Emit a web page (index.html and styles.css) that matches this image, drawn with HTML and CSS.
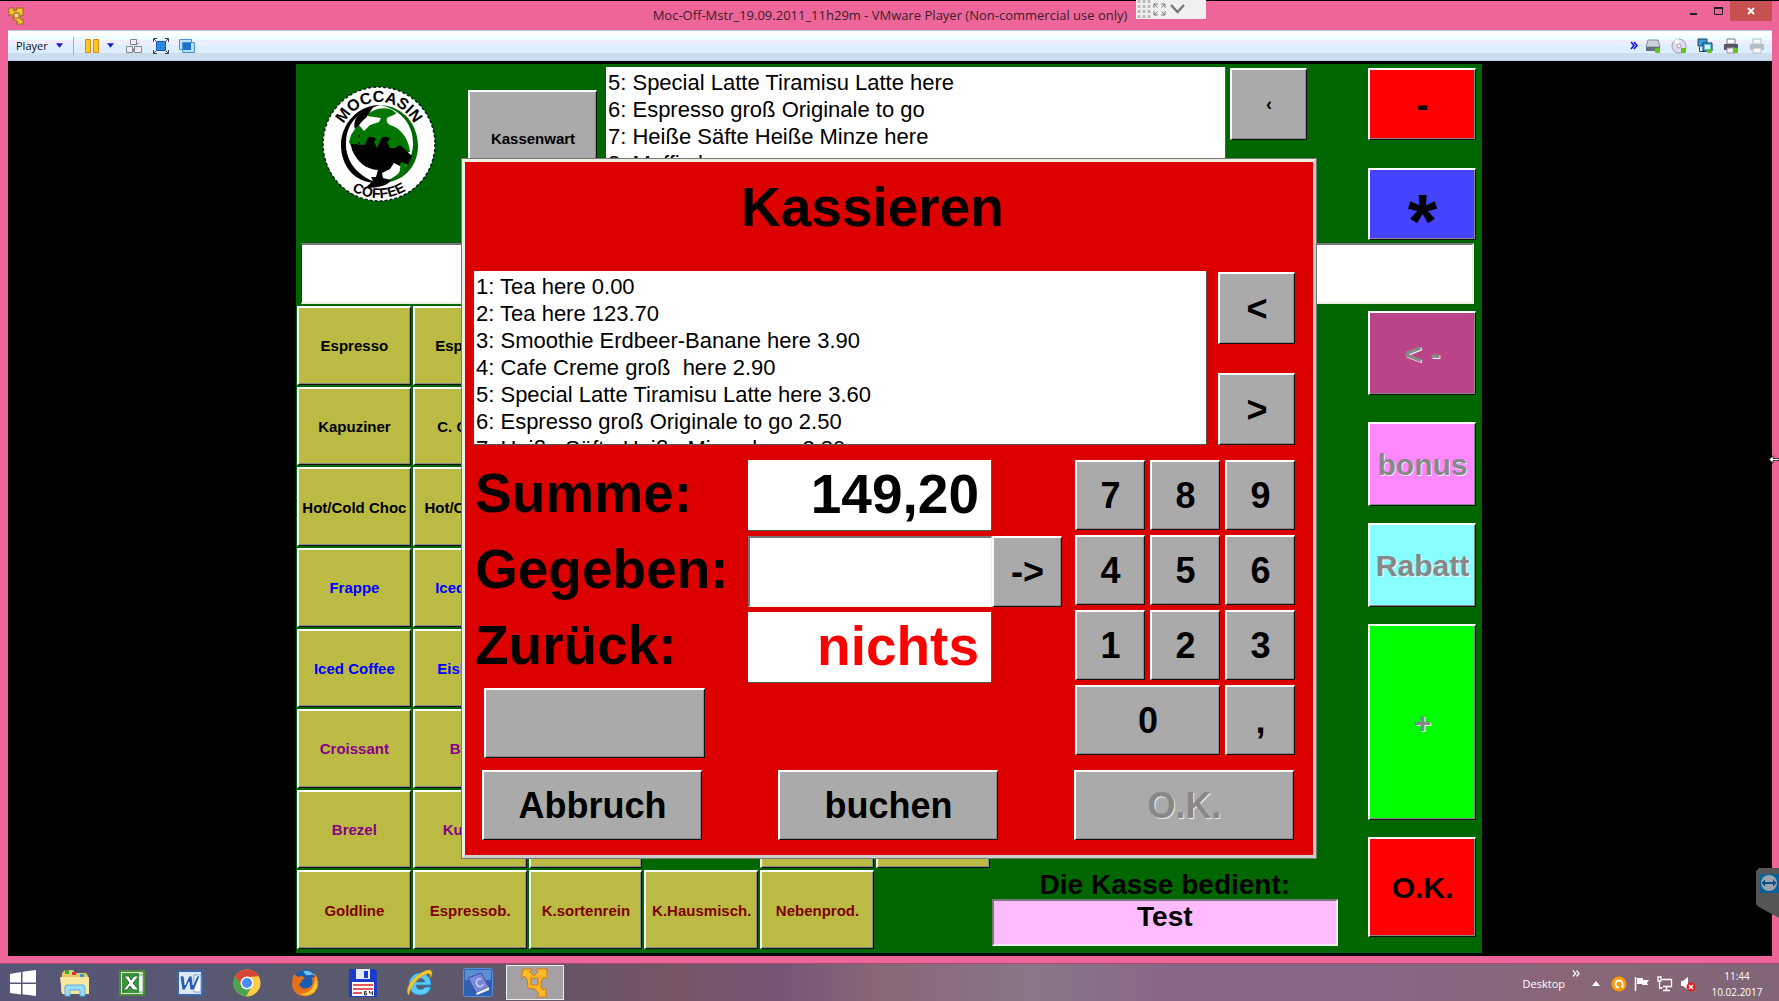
FILE: index.html
```html
<!DOCTYPE html>
<html lang="de">
<head>
<meta charset="utf-8">
<meta name="viewport" content="width=device-width, initial-scale=1">
<title>Moc-Off-Mstr_19.09.2011_11h29m - VMware Player</title>
<link rel="stylesheet" href="styles.css">
</head>
<body>
<div class="window">
  <header class="titlebar">
    <svg class="titlebar-icon" viewBox="0 0 16 18" width="16" height="18" aria-hidden="true">
      <path d="M1 1h5l-1 2 2 1 2-1-1-2h7v8l-2-1-1 3 1 2 2-1v5H8l2-2-2-2H5V9L3 7 1 9z" fill="#fbc42c" stroke="#9a6a1a"/>
      <path d="M6 6h5v5H6z" fill="#ffe27a" stroke="#9a4a2a"/>
    </svg>
    <h1 class="titlebar-text">Moc-Off-Mstr_19.09.2011_11h29m - VMware Player (Non-commercial use only)</h1>
    <div class="window-controls">
      <button class="win-btn" aria-label="Minimieren"><svg viewBox="0 0 18 18" width="18" height="18"><path d="M6 11h7v2H6z" fill="#222"/></svg></button>
      <button class="win-btn" aria-label="Maximieren"><svg viewBox="0 0 18 18" width="18" height="18"><path d="M5.500 6.500h8v6h-8z" fill="none" stroke="#222"/><path d="M5 5h9v2H5z" fill="#222"/></svg></button>
      <button class="win-btn win-btn-close" aria-label="Schließen"><svg viewBox="0 0 18 18" width="18" height="18"><path d="M6 6l6 6M12 6l-6 6" stroke="#fff" stroke-width="1.800"/></svg></button>
    </div>
  </header>

  <nav class="toolbar" aria-label="Player">
    <div class="toolbar-group">
      <button class="tool tool-menu">Player <svg viewBox="0 0 8 5" width="7" height="5"><path d="M0 0h8L4 5z" fill="#1a1ac8"/></svg></button>
      <span class="tool-sep"></span>
      <button class="tool tool-pause" aria-label="Pause"><svg viewBox="0 0 14 14" width="14" height="14"><path d="M.5.5h5v13h-5zM8.500.5h5v13h-5z" fill="#ffc81e" stroke="#d88a10"/></svg><svg viewBox="0 0 8 5" width="7" height="5"><path d="M0 0h8L4 5z" fill="#1a1ac8"/></svg></button>
      <button class="tool" aria-label="Strg+Alt+Entf"><svg viewBox="0 0 18 16" width="18" height="16"><path d="M5.500 1.500h6v5h-6zM1.500 8.500h6v6h-6zM9.500 8.500h7v6h-7z" fill="#eef" stroke="#888"/><path d="M7 6.500h5l2-2M8 14l1-4" stroke="#777" fill="none"/></svg></button>
      <button class="tool" aria-label="Vollbild"><svg viewBox="0 0 16 16" width="16" height="16"><path d="M3.500 3.500h9v9h-9z" fill="#2c8ae0" stroke="#1a58a8"/><path d="M.5 4V.5H4M12 .5h3.500V4M15.500 12v3.500H12M4 15.500H.5V12" fill="none" stroke="#345"/><path d="M1 1l2 2M15 1l-2 2M1 15l2-2M15 15l-2-2" stroke="#345"/></svg></button>
      <button class="tool" aria-label="Unity"><svg viewBox="0 0 16 14" width="16" height="14"><path d="M.5.5h12v10H.5z" fill="#bfe0fa" stroke="#4a90d0"/><path d="M3.500 3.500h12v10h-12z" fill="#bfe0fa" stroke="#4a90d0"/><path d="M4 4h8v7H4z" fill="#1c72d0"/></svg></button>
    </div>
    <div class="toolbar-group toolbar-devices">
      <button class="tool" aria-label="Mehr"><svg viewBox="0 0 8 9" width="8" height="9"><path d="M1 1l3 3.500L1 8M4 1l3 3.500L4 8" fill="none" stroke="#11f" stroke-width="1.600"/></svg></button>
      <button class="tool" aria-label="Festplatte"><svg viewBox="0 0 16 16" width="16" height="16"><path d="M3 2h10l2 7H1z" fill="#ccd4da" stroke="#889"/><path d="M1 9h14v4H1z" fill="#667078"/><rect x="10" y="10" width="5" height="5" rx="1" fill="#5fc41c"/></svg></button>
      <button class="tool" aria-label="CD"><svg viewBox="0 0 16 16" width="16" height="16"><circle cx="8" cy="8" r="7" fill="#dde" stroke="#99a"/><path d="M8 8L3 3a7 7 0 0 1 5-2z" fill="#fff"/><circle cx="8" cy="8" r="2" fill="#fff" stroke="#99a"/><rect x="10" y="10" width="5" height="5" rx="1" fill="#5fc41c"/></svg></button>
      <button class="tool" aria-label="Netzwerk"><svg viewBox="0 0 16 16" width="16" height="16"><path d="M1 1h9v7H1z" fill="#3a9ad8" stroke="#246"/><path d="M6 5h9v8H6z" fill="#58c0f4" stroke="#135"/><path d="M8 7h5v4H8z" fill="#d8f2ff"/><path d="M2.500 9v4.500H9" stroke="#246" fill="none"/><rect x="10" y="11" width="5" height="4" rx="1" fill="#5fc41c"/></svg></button>
      <button class="tool" aria-label="Drucker"><svg viewBox="0 0 16 16" width="16" height="16"><path d="M4 1h8v5H4z" fill="#fff" stroke="#778"/><path d="M1 6h14v6H1z" fill="#556"/><path d="M4 10h8v5H4z" fill="#eef" stroke="#99a"/><rect x="10" y="10" width="5" height="5" rx="1" fill="#5fc41c"/></svg></button>
      <button class="tool" aria-label="Drucker 2" disabled><svg viewBox="0 0 16 16" width="16" height="16"><path d="M4 1h8v5H4z" fill="#f4f6fa" stroke="#b4bcc8"/><path d="M1 6h14v6H1z" fill="#b4bcc8"/><path d="M4 10h8v5H4z" fill="#f4f6fa" stroke="#b4bcc8"/></svg></button>
    </div>
  </nav>

  <div class="guest">
    <main class="pos">
      <div class="pos-top">
        <div class="brand">
          <svg viewBox="0 0 114 116" width="114" height="116" role="img" aria-label="Moccasin Coffee">
            <defs>
              <path id="arc-top" d="M17 58a40 42 0 0 1 80 0"/>
              <path id="arc-bottom" d="M4 58a53 54 0 0 0 106 0"/>
            </defs>
            <ellipse cx="57" cy="58" rx="56" ry="57" fill="#fff" stroke="#021" stroke-width="1.500" stroke-dasharray="3 2"/>
            <path d="M58 19c24 1 38 20 38 41S80 98 57 97c16-3 33-17 34-38S78 23 58 19z" fill="#060"/>
            <path d="M58 19C36 19 19 38 19 59s14 39 38 38C38 92 23 77 24 56S38 25 58 19z" fill="#000"/>
            <path d="M33 43c-3-10 6-20 19-23l-8 12c-6 4-7 9-11 11z" fill="#000"/>
            <path d="M45 30c4-7 20-11 28-4 4 2-5 4-8 6-1 3 0 5 3 7 13 4 19 16 20 27l-12 1-34 2-12-7-3-6 2-7 4-6 4-4 5 6 6-6 9-3 2-4z" fill="#070"/>
            <path d="M29 58l14 1 2-6c1-3 6-3 9 0l-2 3 3 6 4-9c2-3 7-3 9 0l-3 3 3 6h5l5-3 12 11-4 8-8 2-6-3-4 6-8 4 1 5 8 2c-2 5-12 8-26 8l8-7-2-4h5l2-7c-12-1-20-7-26-20z" fill="#000"/>
            <path d="M78 77c6-2 8 4 3 11l-8 6c4-6 6-10 5-17z" fill="#070"/>
            <circle cx="37" cy="50" r="1" fill="#000"/><circle cx="37" cy="57" r="1" fill="#000"/>
            <text class="brand-text"><textPath href="#arc-top" startOffset="50%">MOCCASIN</textPath></text>
            <text class="brand-text brand-text-small"><textPath href="#arc-bottom" startOffset="50%">COFFEE</textPath></text>
          </svg>
        </div>
        <button class="key key-clerk">Kassenwart</button>
        <ol class="receipt receipt-top">
          <li>5: Special Latte Tiramisu Latte here</li>
          <li>6: Espresso groß Originale to go</li>
          <li>7: Heiße Säfte Heiße Minze here</li>
          <li>8: Muffin here</li>
        </ol>
        <button class="key key-scroll key-scroll-small">‹</button>
        <div class="side side-top">
          <button class="key key-minus">-</button>
          <button class="key key-star">*</button>
        </div>
      </div>

      <input class="entry" type="text" aria-label="Eingabe">

      <div class="pos-body">
        <div class="products">
          <button class="key product">Espresso</button>
          <button class="key product">Esp. klein</button>
          <button class="key product product-first">Kapuziner</button>
          <button class="key product">C. Creme</button>
          <button class="key product product-first">Hot/Cold Choc</button>
          <button class="key product">Hot/Cold Tea</button>
          <button class="key product cold product-first">Frappe</button>
          <button class="key product cold">Iced Latte</button>
          <button class="key product cold product-first">Iced Coffee</button>
          <button class="key product cold">Eiskaffee</button>
          <button class="key product bakery product-first">Croissant</button>
          <button class="key product bakery">Bagel</button>
          <button class="key product bakery product-first">Brezel</button>
          <button class="key product bakery">Kuchen</button>
          <button class="key product bakery" aria-label="Gebäck"></button>
          <button class="key product bakery product-fifth" aria-label="Riegel"></button>
          <button class="key product bakery" aria-label="Kekse"></button>
          <button class="key product beans product-first">Goldline</button>
          <button class="key product beans">Espressob.</button>
          <button class="key product beans">K.sortenrein</button>
          <button class="key product beans">K.Hausmisch.</button>
          <button class="key product beans">Nebenprod.</button>
        </div>
        <div class="operator">
          <label for="operator">Die Kasse bedient:</label>
          <output id="operator" class="operator-name">Test</output>
        </div>
        <div class="side side-body">
          <button class="key key-back" disabled>&lt; -</button>
          <button class="key key-bonus" disabled>bonus</button>
          <button class="key key-discount" disabled>Rabatt</button>
          <button class="key key-plus" disabled>+</button>
          <button class="key key-ok">O.K.</button>
        </div>
      </div>

      <section class="checkout" role="dialog" aria-labelledby="checkout-title">
        <h2 class="checkout-title" id="checkout-title">Kassieren</h2>
        <div class="checkout-list">
          <ol class="receipt">
            <li>1: Tea here 0.00</li>
            <li>2: Tea here 123.70</li>
            <li>3: Smoothie Erdbeer-Banane here 3.90</li>
            <li>4: Cafe Creme groß  here 2.90</li>
            <li>5: Special Latte Tiramisu Latte here 3.60</li>
            <li>6: Espresso groß Originale to go 2.50</li>
            <li>7: Heiße Säfte Heiße Minze here 2.80</li>
          </ol>
          <div class="checkout-scroll">
            <button class="key key-scroll">&lt;</button>
            <button class="key key-scroll">&gt;</button>
          </div>
        </div>
        <div class="checkout-main">
          <form class="amounts">
            <label for="sum">Summe:</label>
            <output id="sum" class="amount">149,20</output>
            <label for="given">Gegeben:</label>
            <input id="given" class="amount amount-input" type="text">
            <button type="button" class="key">-&gt;</button>
            <label for="change">Zurück:</label>
            <output id="change" class="amount amount-none">nichts</output>
            <button type="button" class="key key-blank" aria-label="Option"></button>
          </form>
          <div class="keypad">
            <button class="key">7</button><button class="key">8</button><button class="key">9</button>
            <button class="key">4</button><button class="key">5</button><button class="key">6</button>
            <button class="key">1</button><button class="key">2</button><button class="key">3</button>
            <button class="key key-zero">0</button><button class="key">,</button>
          </div>
        </div>
        <div class="checkout-actions">
          <button class="key">Abbruch</button>
          <button class="key">buchen</button>
          <button class="key" disabled>O.K.</button>
        </div>
      </section>
    </main>
  </div>
</div>

<footer class="taskbar">
  <nav class="apps" aria-label="Programme">
    <button class="app app-start" aria-label="Start"><svg viewBox="0 0 26 26" width="26" height="26"><path d="M0 4l11-2v10.500H0zM12.500 1.700L26 0v12.500H12.500zM0 14h11v10.500L0 23zM12.500 14H26v12l-13.500-1.800z" fill="#fff"/></svg></button>
    <button class="app" aria-label="Explorer"><svg viewBox="0 0 30 28" width="30" height="28"><path d="M2 4l3-3h8l2 3h11l2 3v16H1z" fill="#e8c860"/><path d="M5 1h4v4H5z" fill="#3a3"/><path d="M12 3h4v3h-4z" fill="#d33"/><path d="M20 5h4v3h-4z" fill="#39d"/><path d="M0 8h29v17H2z" fill="#f8e8a0"/><path d="M5 27v-9q0-2 2-2h16q2 0 2 2v9h-5v-6H10v6z" fill="#9adcf4" stroke="#5ab0dc"/></svg></button>
    <button class="app" aria-label="Excel"><svg viewBox="0 0 26 26" width="26" height="26"><path d="M1 1h24v24H1z" fill="#d4e8c8" stroke="#4a8a3a" stroke-width="2"/><path d="M17 5h7v17h-7z" fill="#fff" stroke="#7a7"/><path d="M3 3h17v20H3z" fill="#3c9440"/><path d="M5 6h5l2 4 3-4h5l-6 7 6 7h-6l-3-4-3 4H4l6-7z" fill="#fff" stroke="#1c6a24"/></svg></button>
    <button class="app" aria-label="Word"><svg viewBox="0 0 26 26" width="26" height="26"><path d="M1 1h24v24H1z" fill="#dce8f8" stroke="#3a68b0" stroke-width="2"/><path d="M17 5h7v17h-7z" fill="#fff" stroke="#79b"/><path d="M3 6h4l1 9 4-9h3l1 9 4-9h3l-6 14h-4l-1-8-4 8H5z" fill="#2a5cb8" stroke="#fff" stroke-width=".7"/></svg></button>
    <button class="app" aria-label="Chrome"><svg viewBox="0 0 28 28" width="28" height="28"><circle cx="14" cy="14" r="13.500" fill="#fc4"/><path d="M2.300 7.200A13.500 13.500 0 0 1 25.700 7.200L14 8A6 6 0 0 0 8.800 17z" fill="#d94436"/><path d="M2.300 7.200A13.500 13.500 0 0 0 13 27.500L19.200 17A6 6 0 0 1 8.800 17z" fill="#4aa350"/><circle cx="14" cy="14" r="6.500" fill="#fff"/><circle cx="14" cy="14" r="5" fill="#4a8af4"/></svg></button>
    <button class="app" aria-label="Firefox"><svg viewBox="0 0 28 28" width="28" height="28"><circle cx="15" cy="13" r="12.500" fill="#1a5cb0"/><path d="M12 2a12 12 0 0 1 12 5c-4-3-6 0-9-1z" fill="#6cc4f0"/><path d="M3 5l4 3c3-2 5-1 7 1l-3 2c0 3-2 3-3 4 2 6 9 5 12 2 3-3 1-8 0-9 6 3 3-4 2-5 7 5 7 14 2 20-6 6-16 6-21-1C0 17 1 9 3 5z" fill="#e8701a"/><path d="M24 7c4 7 3 13-2 17-4 3-9 3-13 1 10 0 16-8 15-18z" fill="#ffc030"/></svg></button>
    <button class="app" aria-label="Total Commander"><svg viewBox="0 0 28 28" width="28" height="28"><path d="M0 0h26l2 2v26H0z" fill="#1c3cc8"/><path d="M7 0h14v10H7z" fill="#e4e8f0"/><path d="M15 2h4v7h-4z" fill="#1c3cc8"/><path d="M3 13h22v14H3z" fill="#fff"/><path d="M4 16h20M4 20h20M4 24h9" stroke="#d22" stroke-width="1.400"/><path d="M17.500 22.500h-2v3.500h2v-2h-2M20.500 22v2h3m0-2v4" stroke="#333" fill="none"/></svg></button>
    <button class="app" aria-label="Internet Explorer"><svg viewBox="0 0 28 28" width="28" height="28"><path d="M14 4c7 0 11 5 11 12H10c0 5 7 6 9 2h6c-2 6-6 8-11 8C7 26 3 21 3 15S8 4 14 4zm-4 9h9c-1-5-8-5-9 0z" fill="#5ccaf6" stroke="#1c8cd0" stroke-width=".8"/><path d="M3 26c-5-4 2-16 12-22 6-4 11-4 11 0 0 2-1 4-2 5 1-3 0-5-3-4C13 7 4 17 3 26z" fill="#f8c828" stroke="#c8921a" stroke-width=".5"/></svg></button>
    <button class="app" aria-label="Wörterbuch"><svg viewBox="0 0 30 30" width="30" height="30"><rect x=".5" y=".5" width="29" height="28" rx="2" fill="#2c62b4" stroke="#5a90d8"/><path d="M2 2h26v10H2z" fill="#5a90d0"/><path d="M5 10l13-5 8 14-13 6z" fill="#7c88d8" stroke="#44a"/><path d="M13 25l13-6v3l-12 5z" fill="#eee"/><path d="M18 11c-4-1-6 3-4 6s6 1 6-1" fill="none" stroke="#c8ccff" stroke-width="1.500"/></svg></button>
    <button class="app app-active" aria-label="VMware Player"><svg viewBox="0 0 28 30" width="28" height="30"><path d="M2 1h9L9 4l4 4 4-4-2-3h11v10l-3-2-3 4v6l2 3 3-2v9h-9l2-3-4-5-7-1-1-9-3-3-3 3z" fill="#fdb92a" stroke="#d07c10"/><path d="M10 10h7v7h-7z" fill="#aaa" stroke="#d07c10"/></svg></button>
  </nav>
  <div class="tray">
    <span class="tray-desktop">Desktop</span>
    <svg class="tray-more" viewBox="0 0 8 7" width="8" height="7"><path d="M1 .5l2.500 3L1 6.500M4.500.5l2.500 3-2.500 3" fill="none" stroke="#fff" stroke-width="1.300"/></svg>
    <svg class="tray-up" viewBox="0 0 8 5" width="8" height="5"><path d="M0 5l4-5 4 5z" fill="#fff"/></svg>
    <svg viewBox="0 0 16 16" width="16" height="16"><circle cx="8" cy="8" r="7.500" fill="#f90"/><path d="M11.500 12V8A3.500 3.500 0 1 0 8 11.500" fill="none" stroke="#fff" stroke-width="2"/></svg>
    <svg viewBox="0 0 16 16" width="16" height="16"><path d="M1.500 1v14" stroke="#fff" stroke-width="1.500"/><path d="M3 2h6v2h6l-2 3 1 2H8V8H3z" fill="#fff"/></svg>
    <svg viewBox="0 0 16 16" width="16" height="16"><path d="M5 3.500h9.500v7H6M9.500 10v4M6 14.500h7M2.500 5v7h3M1 1h3v4H1z" fill="none" stroke="#fff" stroke-width="1.300"/></svg>
    <svg viewBox="0 0 16 16" width="16" height="16"><path d="M1 5h2l5-4v13l-5-4H1z" fill="#fff"/><circle cx="11" cy="11" r="4.500" fill="#e02020"/><path d="M9 9l4 4M13 9l-4 4" stroke="#fff" stroke-width="1.400"/></svg>
    <time class="clock" datetime="2017-02-10T11:44">11:44<br>10.02.2017</time>
  </div>
</footer>

<div class="vm-tab">
  <svg viewBox="0 0 70 19" width="70" height="19" aria-hidden="true">
    <path d="M3 0v19M8 0v19M13 0v19" stroke="#bbb" stroke-width="3" stroke-dasharray="3 2"/>
    <path d="M18 8V4h4M25 4h4v4M29 11v4h-4M22 15h-4v-4M18 4l3.500 3.500M29 4l-3.500 3.500M29 15l-3.500-3.500M18 15l3.500-3.500" fill="none" stroke="#777"/>
    <path d="M35 5l6.500 7L48 5" fill="none" stroke="#777" stroke-width="2.500"/>
  </svg>
</div>
<button class="teamviewer" aria-label="TeamViewer">
  <svg viewBox="0 0 23 50" width="23" height="50"><path d="M23 0H3L0 3v33l3 3 20 11z" fill="#555"/><path d="M4 6h19v19H4z" fill="#05609c"/><circle cx="13" cy="15" r="8" fill="#99a4ac"/><path d="M5.500 15L9 11.500V14h8v-2.500L20.500 15 17 18.500V16H9v2.500z" fill="#05508c"/></svg>
</button>
<svg class="pointer" viewBox="0 0 11 9" width="11" height="9" aria-hidden="true"><path d="M1 4.500L5 .8v2.700h6v2H5v2.700z" fill="#fff" stroke="#000" stroke-width=".7"/></svg>
</body>
</html>
```
FILE: styles.css
```css
* { box-sizing: border-box; }

body {
  margin: 0;
  min-height: 100vh;
  display: flex;
  flex-direction: column;
  position: relative;
  overflow-x: hidden;
  background: #000;
  font-family: "Liberation Sans", Arial, sans-serif;
}

button, input { font: inherit; color: inherit; border-radius: 0; }
button { padding: 0; }
svg { display: block; }

/* Player window */
.window {
  flex: 1;
  display: flex;
  flex-direction: column;
  margin-top: 1px;
  padding: 0 7px 7px 8px;
  background: #ee6699;
  border-bottom: 1px solid #a84a70;
}

.titlebar {
  display: grid;
  grid-template-columns: 1fr auto 1fr;
  height: 29px;
}
.titlebar-icon { margin-top: 6px; }
.titlebar-text {
  margin: 0;
  font: 13px/28px "Open Sans", "Noto Sans", sans-serif;
  color: #3a1c2a;
}
.window-controls {
  display: flex;
  justify-content: flex-end;
  align-items: flex-start;
}
.win-btn {
  width: 25px;
  height: 20px;
  display: grid;
  place-items: center;
  background: none;
  border: 0;
}
.win-btn-close { width: 42px; background: #c75050; }

.toolbar {
  display: flex;
  justify-content: space-between;
  height: 31px;
  padding: 0 7px 0 4px;
  border: solid #b4ccee;
  border-width: 1px 0;
  background: linear-gradient(#fff 0 5px, #eeffff 5px 9px, #eeeeff 9px 14px, #ddeeff 14px 22px, #ccddee 22px);
}
.toolbar-group { display: flex; align-items: center; gap: 10px; }
.tool {
  display: flex;
  align-items: center;
  gap: 8px;
  padding: 0;
  background: none;
  border: 0;
}
.tool-menu { padding-left: 4px; font: 11px/16px "Open Sans", "Noto Sans", sans-serif; color: #111; }
.tool-sep { width: 1px; height: 18px; background: #8ab4d8; }
.tool-pause { margin: 0 1px; }
.toolbar-devices .tool:first-child { margin-right: -3px; }

.guest {
  flex: 1;
  display: flex;
  padding: 3px 290px 3px 288px;
  background: #000;
}

/* Point-of-sale screen */
.pos {
  position: relative;
  flex: 1;
  min-width: 0;
  display: flex;
  flex-direction: column;
  padding: 3px 6px 4px 1px;
  background: #006600;
}

.key {
  display: grid;
  place-items: center;
  min-width: 0;
  background: #aaa;
  border: solid;
  border-width: 2px 1px 1px 2px;
  border-color: #fff #111 #111 #fff;
  box-shadow: inset -1px -1px #888;
  color: #000;
  font-weight: bold;
}
.key:disabled { color: #888; text-shadow: 1px 1px #eee; }

.receipt {
  margin: 0;
  padding: 2px;
  overflow: hidden;
  list-style: none;
  background: #fff;
  border: solid #555;
  border-width: 0 1px 1px 0;
  font-size: 22px;
  line-height: 27px;
}
.receipt li { white-space: pre; }

.pos-top { display: flex; height: 173px; }
.brand { width: 171px; padding: 19px 0 0 25px; }
.brand-text { font-size: 16px; font-weight: bold; text-anchor: middle; }
.brand-text-small { font-size: 14px; }
.key-clerk { width: 129px; height: 96px; margin-top: 23px; font-size: 15px; }
.receipt-top { flex: 1; min-width: 0; margin: 0 4px 0 9px; }
.key-scroll { width: 77px; height: 72px; font-size: 36px; }
.key-scroll-small { margin-top: 1px; font-size: 18px; }

.side { width: 108px; display: flex; flex-direction: column; font-size: 30px; }
.side-top { margin: 1px 0 0 61px; gap: 28px; }
.key-minus { height: 72px; background: #f00; font-size: 36px; }
.key-star { height: 72px; padding-top: 32px; background: #4444ff; font-size: 76px; line-height: 36px; }

.entry {
  height: 61px;
  margin: 3px 2px 2px 4px;
  background: #fff;
  border: solid;
  border-width: 2px 2px 2px 1px;
  border-color: #777 #f0f0e0 #f0f0e0 #333;
  font-size: 30px;
}

.pos-body { flex: 1; display: flex; }
.products {
  flex: 2;
  display: grid;
  grid-template: repeat(8, minmax(0, 1fr)) / repeat(6, minmax(0, 1fr));
  gap: 2px;
  font-size: 15px;
}
.product { overflow: hidden; background: #bbbb44; white-space: nowrap; }
.product-first { grid-column: 1; }
.product-fifth { grid-column: 5; }
.cold { color: #00f; }
.bakery { color: #808; }
.beans { color: #800000; }

.operator {
  flex: 1;
  display: flex;
  flex-direction: column;
  justify-content: flex-end;
  margin: 0 30px 3px 2px;
  font-size: 28px;
  line-height: 29px;
  font-weight: bold;
  text-align: center;
}
.operator-name {
  height: 47px;
  background: #ffbbff;
  border: 2px solid;
  border-color: #777 #eee #eee #777;
  line-height: 32px;
}

.side-body { padding: 5px 0 12px; gap: 17px; }
.key-back, .key-bonus, .key-discount { height: 84px; }
.key-back { margin-bottom: 10px; background: #bb4488; }
.key-bonus { background: #ff88ff; }
.key-discount { background: #88ffff; }
.key-plus { flex: 1; background: #0f0; }
.key-ok { height: 100px; background: #f00; }

/* Checkout dialog */
.checkout {
  position: absolute;
  inset: 94px 165px 94px;
  display: flex;
  flex-direction: column;
  padding: 0 18px 15px 9px;
  background: #dd0000;
  border: 4px solid;
  border-color: #eeeee0 #ccc #ccc #eeeee0;
  outline: 1px solid #777;
  outline-offset: -1px;
  font-size: 36px;
}
.checkout-title {
  margin: 0;
  padding: 14px 24px 0 0;
  height: 109px;
  font-size: 55px;
  line-height: 62px;
  text-align: center;
}
.checkout-list { flex: 1; min-height: 0; display: flex; gap: 11px; }
.checkout-list .receipt { flex: 1; min-width: 0; height: 174px; }
.checkout-scroll {
  display: flex;
  flex-direction: column;
  justify-content: space-between;
  height: 174px;
  padding-top: 1px;
}

.checkout-main { display: flex; gap: 13px; padding-top: 13px; }
.amounts {
  flex: 1;
  display: grid;
  grid-template-columns: 1fr 244px 70px;
  grid-template-rows: repeat(3, 71px) 70px;
  gap: 5px 0;
}
.amounts label {
  grid-column: 1;
  padding-left: 1px;
  font-size: 55px;
  font-weight: bold;
  line-height: 66px;
}
.amount {
  padding: 0 12px 0 0;
  background: #fff;
  border: solid #555;
  border-width: 0 1px 1px 0;
  font-size: 55px;
  font-weight: bold;
  line-height: 68px;
  text-align: right;
}
.amount-input { width: 100%; min-width: 0; border-width: 2px 1px 1px 2px; border-color: #777 #eee #eee #777; }
.amount-none { color: #f00; }
.key-blank { grid-column: 1; width: 221px; margin-left: 10px; }

.keypad {
  display: grid;
  grid-template-columns: repeat(3, 70px);
  grid-auto-rows: 70px;
  gap: 5px;
}
.key-zero { grid-column: span 2; }

.checkout-actions {
  display: flex;
  justify-content: space-between;
  padding: 12px 1px 0 8px;
}
.checkout-actions .key { width: 220px; height: 70px; }

/* Host taskbar */
.taskbar {
  display: flex;
  justify-content: space-between;
  height: 37px;
  background: linear-gradient(90deg, #555577, #5a5a6e 20%, #665566 32%, #775566 38%, #775577 44%, #886677 49%, #887788 58%, #886688 66%, #886688 76%, #886677 88%, #806678);
  color: #fff;
}
.apps {
  display: grid;
  grid-template-columns: 46px repeat(9, minmax(0, 1fr));
  width: 564px;
}
.app { display: grid; place-items: center; background: none; border: 0; }
.app-active { margin: 1px 0; background: #a4a0a4; border: 1px solid #eee; }

.tray {
  display: flex;
  align-items: center;
  gap: 7px;
  padding: 2px 12px 0 0;
  font: 10px/16px "Open Sans", "Noto Sans", sans-serif;
}
.tray-desktop { font-size: 11px; }
.tray-more { margin-bottom: 20px; }
.tray-up { margin: 0 4px 0 5px; }
.clock { width: 60px; margin-left: 4px; text-align: center; }

/* Host overlays */
.vm-tab { position: absolute; top: 0; left: 1136px; background: #f0f0f0; }
.teamviewer { position: absolute; right: 0; bottom: 83px; background: none; border: 0; }
.pointer { position: absolute; right: 0; top: 455px; }
```
